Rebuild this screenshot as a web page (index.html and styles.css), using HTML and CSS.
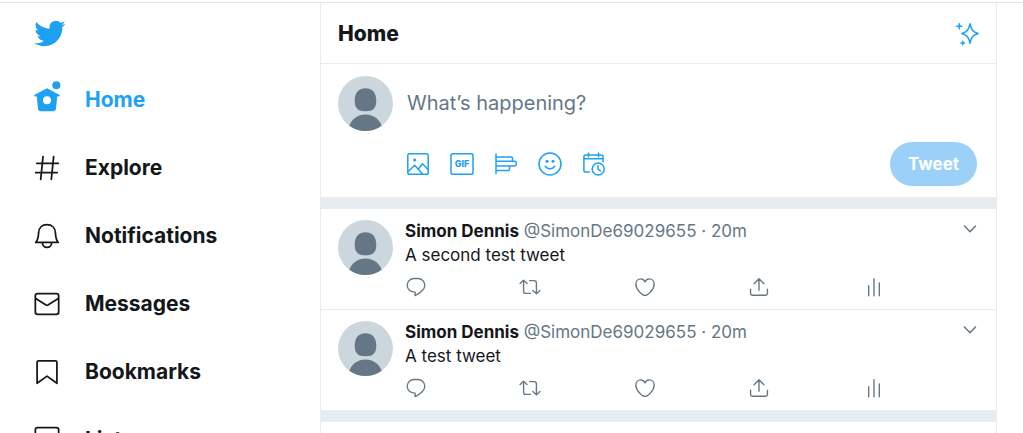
FILE: index.html
```html
<!DOCTYPE html>
<html lang="en">
<head>
  <meta charset="UTF-8">
  <meta name="viewport" content="width=device-width, initial-scale=1.0">
  <title>Home / Twitter</title>
  <link rel="stylesheet" href="styles.css">
</head>
<body>
  <!-- shared icons -->
  <svg class="sprite" aria-hidden="true">
    <symbol id="avatar" viewBox="0 0 55 55">
      <circle cx="27.500" cy="27.500" r="27.500" fill="#ccd6dd"/>
      <path d="M27.500 12.300c7.500 0 10.800 5 10.800 12.500 0 7.500-3 10.500-10.800 10.500s-10.800-3-10.800-10.500c0-7.500 3.300-12.500 10.800-12.500z" fill="#657786"/>
      <path d="M11.300 49.700C14 42.500 20 38.500 27.500 38.500s13.500 4 16.200 11.200a27.500 27.500 0 0 1-32.400 0z" fill="#657786"/>
    </symbol>
    <symbol id="reply" viewBox="0 0 24 24">
      <path d="M14 2.700H10C5.600 2.700 2.400 5.900 2.400 10.100c0 4.400 3.600 7.500 8.600 7.500v3.700c4.500-2.200 10.600-5.700 10.600-11.200 0-4.200-3.200-7.400-7.600-7.400z"/>
    </symbol>
    <symbol id="retweet" viewBox="0 0 24 24">
      <path d="M1.200 8.200L5 4.500l3.800 3.700M5 5v11.500c0 1.500 1 2.500 2.500 2.500h5M22.800 15.800L19 19.500l-3.800-3.700M19 19V7.500C19 6 18 5 16.500 5h-5"/>
    </symbol>
    <symbol id="like" viewBox="0 0 24 24">
      <path d="M12 21.200C9.500 21.200 2 15.200 2 9c0-3.300 2.300-5.800 5.200-5.800 2.300 0 4 1.300 4.800 3.200.8-1.900 2.500-3.200 4.800-3.200C19.700 3.200 22 5.700 22 9c0 6.200-7.500 12.200-10 12.200z"/>
    </symbol>
    <symbol id="share" viewBox="0 0 24 24">
      <path d="M12 15.500V3.300M6.600 8.500L12 3.100l5.400 5.400M2.800 14.500v4.600c0 1.200.7 1.900 1.900 1.900h14.600c1.200 0 1.900-.7 1.900-1.900v-4.600"/>
    </symbol>
    <symbol id="stats" viewBox="0 0 24 24">
      <path d="M12 3v18.500M6.200 10.500v11M17.800 7.500v14"/>
    </symbol>
    <symbol id="chevron" viewBox="0 0 14 14">
      <path d="M1.500 4L7 9.800 12.500 4"/>
    </symbol>
  </svg>

  <div class="page">
    <header class="sidebar">
      <a href="#" class="logo" aria-label="Twitter">
        <svg viewBox="0 0 24 24"><path d="M23.643 4.937c-.835.37-1.732.62-2.675.733.962-.576 1.7-1.490 2.048-2.578-.9.534-1.897.922-2.958 1.130-.85-.904-2.060-1.470-3.400-1.470-2.572 0-4.658 2.086-4.658 4.660 0 .364.042.718.120 1.060-3.873-.195-7.304-2.050-9.602-4.868-.4.690-.630 1.490-.630 2.342 0 1.616.823 3.043 2.072 3.878-.764-.025-1.482-.234-2.110-.583v.060c0 2.257 1.605 4.140 3.737 4.568-.392.106-.803.162-1.227.162-.3 0-.593-.028-.877-.082.593 1.850 2.313 3.198 4.352 3.234-1.595 1.250-3.604 1.995-5.786 1.995-.376 0-.747-.022-1.112-.065 2.062 1.323 4.510 2.093 7.140 2.093 8.570 0 13.255-7.098 13.255-13.254 0-.2-.005-.402-.014-.602.910-.658 1.700-1.477 2.323-2.410z"/></svg>
      </a>
      <nav class="menu">
        <a href="#" class="menu-item active">
          <svg class="solid" viewBox="0 3 30 30">
            <path fill-rule="evenodd" d="M15 5.500L28.200 12.500c.9.500.5 1.800-.5 1.700l-1.700-.2-1.400 13.300c-.2 1.700-1.200 2.700-2.900 2.700H8.300c-1.700 0-2.700-1-2.900-2.700L4 14l-1.700.2c-1 .1-1.400-1.200-.5-1.700zM15 14a4.300 4.300 0 1 0 0 8.600 4.300 4.300 0 0 0 0-8.600z"/>
            <circle cx="25" cy="2.300" r="4.300"/>
          </svg>
          <span>Home</span>
        </a>
        <a href="#" class="menu-item">
          <svg viewBox="0 0 24 24"><path d="M8.600 2.300L6.600 21.700M17.700 2.300l-2 19.400M3.300 8h18.400M2.300 16h18.400"/></svg>
          <span>Explore</span>
        </a>
        <a href="#" class="menu-item">
          <svg viewBox="0 0 24 24"><path d="M2.400 17.500c1.800-2 2.200-4.200 2.400-8.300C5 5.100 7.800 2.300 12 2.300s7 2.800 7.200 6.900c.2 4.100.6 6.300 2.400 8.300zM8 17.800c.2 2.400 1.800 4 4 4s3.800-1.600 4-4"/></svg>
          <span>Notifications</span>
        </a>
        <a href="#" class="menu-item">
          <svg viewBox="0 0 24 24"><rect x="2" y="3" width="20" height="17.800" rx="2"/><path d="M2.300 7.200l8.900 5.700c.5.300 1.100.3 1.600 0l8.900-5.700"/></svg>
          <span>Messages</span>
        </a>
        <a href="#" class="menu-item">
          <svg viewBox="0 0 24 24"><path d="M3.500 21.700V3.700c0-.8.400-1.200 1.200-1.200h14.600c.8 0 1.200.4 1.200 1.200v18L12 15.500z"/></svg>
          <span>Bookmarks</span>
        </a>
        <a href="#" class="menu-item">
          <svg viewBox="0 0 24 24"><rect x="2" y="1.300" width="20" height="20.500" rx="2"/><path d="M7 8.500h10M7 12h10M7 15.500h6"/></svg>
          <span>Lists</span>
        </a>
      </nav>
    </header>

    <main class="feed">
      <div class="feed-header">
        <h1>Home</h1>
        <button class="icon-btn sparkle" aria-label="Timeline options">
          <svg viewBox="0 0 24 24"><path d="M14 1.700c1.200 6.100 2.700 8.300 8.200 9.800-5.500 1.500-7 3.700-8.200 9.800-1.200-6.100-2.700-8.300-8.200-9.800 5.500-1.500 7-3.700 8.200-9.800z"/><path d="M3.300 1.800v5M.8 4.300h5M6.700 19.200v3.600M4.900 21h3.600"/></svg>
        </button>
      </div>

      <form class="compose">
        <svg class="avatar"><use href="#avatar"/></svg>
        <div class="compose-body">
          <input type="text" class="compose-input" placeholder="What’s happening?" aria-label="Tweet text">
          <div class="compose-bar">
            <div class="tools">
              <button type="button" class="icon-btn" aria-label="Add photo">
                <svg viewBox="0 0 24 24"><rect x="1.800" y="1.800" width="20.400" height="20.400" rx="1.800"/><path d="M2.200 19.500l6.500-6.200 7.800 8.600M12.500 17l4-5.200 5.500 5.700"/><circle class="dot" cx="8.700" cy="8" r="1.600"/></svg>
              </button>
              <button type="button" class="icon-btn" aria-label="Add GIF">
                <svg viewBox="0 0 24 24"><rect x="1" y="1.800" width="22" height="20.400" rx="1.800"/><text x="12" y="15" text-anchor="middle">GIF</text></svg>
              </button>
              <button type="button" class="icon-btn" aria-label="Add poll">
                <svg viewBox="0 0 24 24"><path d="M2 2v19.500M2 5h15.300c.7 0 1.200.5 1.200 1.200v3M2 9.200h18.800c.8 0 1.400.5 1.400 1.300v2.200c0 .8-.6 1.300-1.400 1.300H2M15.500 14v3.300c0 .8-.5 1.300-1.300 1.300H2"/></svg>
              </button>
              <button type="button" class="icon-btn" aria-label="Add emoji">
                <svg viewBox="0 0 24 24"><circle cx="12" cy="12" r="11"/><path d="M7.300 14.200c2 3.400 7.400 3.400 9.400 0"/><circle class="dot" cx="9" cy="9.300" r="1.500"/><circle class="dot" cx="15" cy="9.300" r="1.500"/></svg>
              </button>
              <button type="button" class="icon-btn" aria-label="Schedule">
                <svg viewBox="0 0 24 24"><path d="M7.500 20H3.700c-1.100 0-1.800-.7-1.800-1.800V4.700c0-1.100.7-1.800 1.800-1.800h15.600c1.100 0 1.800.7 1.800 1.800v5M1.900 6.800h19.200M6.500 1v3.700M16.500 1v3.700"/><circle cx="16.200" cy="17" r="6"/><path d="M16 13.700v3.500l2.600 1.800"/></svg>
              </button>
            </div>
            <button type="submit" class="tweet-btn" disabled>Tweet</button>
          </div>
        </div>
      </form>

      <div class="band"></div>

      <article class="tweet">
        <svg class="avatar"><use href="#avatar"/></svg>
        <div class="tweet-body">
          <div class="tweet-head">
            <p class="byline"><strong>Simon Dennis</strong> <span>@SimonDe69029655 · 20m</span></p>
            <button class="more" aria-label="More"><svg><use href="#chevron"/></svg></button>
          </div>
          <p class="tweet-text">A second test tweet</p>
          <div class="actions">
            <button aria-label="Reply"><svg><use href="#reply"/></svg></button>
            <button aria-label="Retweet"><svg><use href="#retweet"/></svg></button>
            <button aria-label="Like"><svg><use href="#like"/></svg></button>
            <button aria-label="Share"><svg><use href="#share"/></svg></button>
            <button aria-label="Tweet activity"><svg><use href="#stats"/></svg></button>
          </div>
        </div>
      </article>

      <article class="tweet">
        <svg class="avatar"><use href="#avatar"/></svg>
        <div class="tweet-body">
          <div class="tweet-head">
            <p class="byline"><strong>Simon Dennis</strong> <span>@SimonDe69029655 · 20m</span></p>
            <button class="more" aria-label="More"><svg><use href="#chevron"/></svg></button>
          </div>
          <p class="tweet-text">A test tweet</p>
          <div class="actions">
            <button aria-label="Reply"><svg><use href="#reply"/></svg></button>
            <button aria-label="Retweet"><svg><use href="#retweet"/></svg></button>
            <button aria-label="Like"><svg><use href="#like"/></svg></button>
            <button aria-label="Share"><svg><use href="#share"/></svg></button>
            <button aria-label="Tweet activity"><svg><use href="#stats"/></svg></button>
          </div>
        </div>
      </article>

      <div class="band"></div>
    </main>
  </div>
</body>
</html>
```
FILE: styles.css
```css
* {
  box-sizing: border-box;
}
body {
  margin: 0;
  font-family: Inter, "Liberation Sans", sans-serif;
  font-size: 17px;
  line-height: 24px;
  color: #14171a;
  background: #fff;
}
h1, p {
  margin: 0;
}
a {
  color: inherit;
  text-decoration: none;
}
button {
  padding: 0;
  border: none;
  background: none;
  font-family: inherit;
  cursor: pointer;
}
svg {
  display: block;
  fill: none;
  stroke: currentColor;
  stroke-width: 1.5;
  stroke-linecap: round;
  stroke-linejoin: round;
}
.sprite {
  display: none;
}
.page {
  display: grid;
  grid-template-columns: 320px minmax(0, 1fr);
  height: 100vh;
  padding-top: 2px;
  padding-right: 26px;
  overflow: hidden;
  background: linear-gradient(#e1e5e9, #e1e5e9) 0 2px / 100% 1px no-repeat;
}

/* sidebar */
.sidebar {
  padding: 15px 33px;
}
.logo svg {
  width: 33px;
  height: 33px;
  fill: #1da1f2;
  stroke: none;
}
.menu {
  padding-top: 16px;
}
.menu-item {
  display: flex;
  align-items: center;
  gap: 24px;
  height: 68px;
  font-size: 21px;
  font-weight: 700;
}
.menu-item svg {
  width: 28px;
  height: 28px;
  overflow: visible;
}
.menu-item .solid {
  fill: currentColor;
  stroke: none;
}
.active {
  color: #1da1f2;
}

/* feed */
.feed {
  margin-top: 1px;
  border-left: 1px solid #e6ecf0;
  border-right: 1px solid #e6ecf0;
}
.feed-header {
  display: flex;
  align-items: center;
  justify-content: space-between;
  height: 61px;
  padding: 1px 16px 0 17px;
  border-bottom: 1px solid #e6ecf0;
}
.feed-header h1 {
  font-size: 21px;
  font-weight: 800;
}
.icon-btn {
  color: #1da1f2;
}
.icon-btn svg {
  width: 24px;
  height: 24px;
}
.icon-btn text {
  font-size: 9px;
  font-weight: 800;
  fill: currentColor;
  stroke: none;
}
.icon-btn .dot {
  fill: currentColor;
  stroke: none;
}
.avatar {
  flex: none;
  width: 55px;
  height: 55px;
  stroke: none;
}
.compose, .tweet {
  display: flex;
  gap: 12px;
  padding: 11px 19px 11px 17px;
}
.compose {
  padding-top: 12px;
}
.compose-body, .tweet-body {
  flex: 1;
  min-width: 0;
}
.compose-input {
  display: block;
  width: 100%;
  height: 54px;
  padding: 0 2px;
  border: none;
  outline: none;
  font: inherit;
  font-size: 20px;
  color: #14171a;
}
.compose-input::placeholder {
  color: #657786;
  opacity: 1;
}
.compose-bar {
  display: flex;
  align-items: center;
  justify-content: space-between;
  padding-top: 12px;
}
.tools {
  display: flex;
  gap: 20px;
  padding-left: 1px;
}
.tweet-btn {
  height: 44px;
  padding: 0 18px;
  border-radius: 22px;
  background: #9bd1f9;
  color: #fff;
  font-size: 17px;
  font-weight: 700;
}
.band {
  height: 12px;
  background: #e6ecf0;
}

/* tweets */
.tweet {
  padding-top: 10px;
}
.tweet .avatar {
  margin-top: 1px;
}
.tweet + .tweet {
  border-top: 1px solid #e6ecf0;
}
.tweet-head {
  display: flex;
  align-items: flex-start;
  justify-content: space-between;
}
.byline span {
  color: #657786;
}
.more {
  padding-top: 3px;
  color: #657786;
}
.more svg {
  width: 14px;
  height: 14px;
}
.actions {
  display: grid;
  grid-template-columns: repeat(5, 1fr);
  padding-top: 9px;
  color: #657786;
}
.actions button {
  justify-self: start;
  color: inherit;
}
.actions svg {
  width: 22px;
  height: 22px;
}
```
